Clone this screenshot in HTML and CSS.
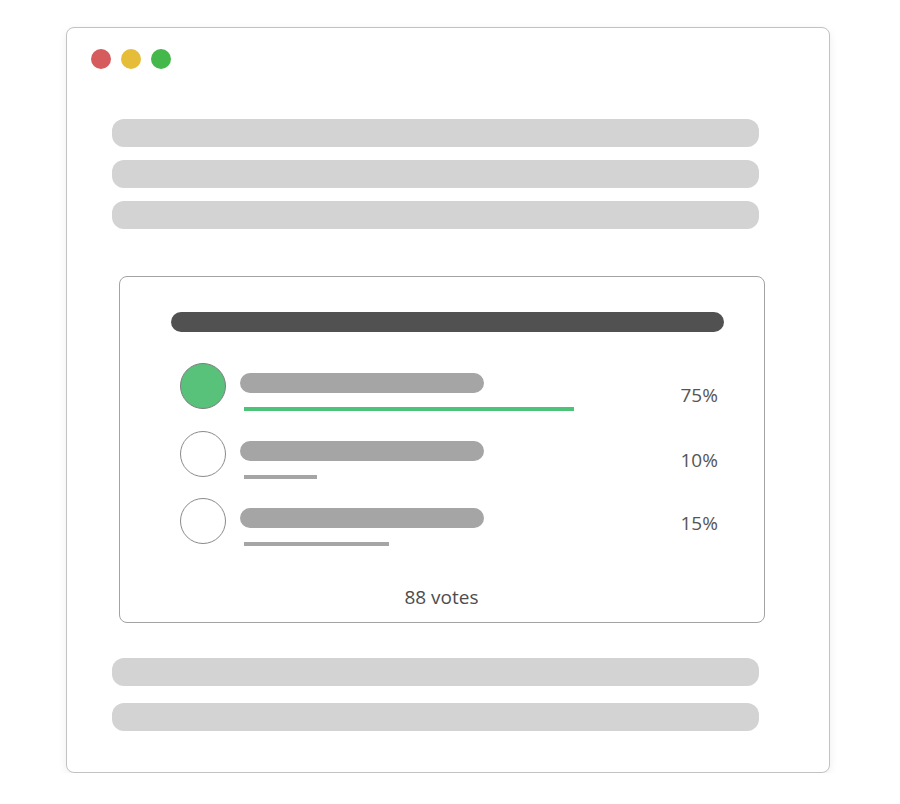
FILE: index.html
```html
<!DOCTYPE html>
<html>
<head>
<meta charset="utf-8">
<link rel="stylesheet" href="styles.css">
</head>
<body>
<div class="window">
  <div class="dots">
    <span class="dot red"></span>
    <span class="dot yellow"></span>
    <span class="dot green"></span>
  </div>
  <div class="lines top">
    <div class="line"></div>
    <div class="line"></div>
    <div class="line"></div>
  </div>
  <div class="poll">
    <div class="title-bar"></div>
    <div class="options">
      <div class="option">
        <span class="radio selected"></span>
        <div class="opt-body">
          <div class="opt-label"></div>
          <div class="opt-progress green-bar" style="width:330px"></div>
        </div>
        <span class="pct pct-1">75%</span>
      </div>
      <div class="option">
        <span class="radio"></span>
        <div class="opt-body">
          <div class="opt-label"></div>
          <div class="opt-progress" style="width:73px"></div>
        </div>
        <span class="pct pct-2">10%</span>
      </div>
      <div class="option">
        <span class="radio"></span>
        <div class="opt-body">
          <div class="opt-label"></div>
          <div class="opt-progress" style="width:145px"></div>
        </div>
        <span class="pct pct-3">15%</span>
      </div>
    </div>
    <div class="votes">88 votes</div>
  </div>
  <div class="lines bottom">
    <div class="line"></div>
    <div class="line"></div>
  </div>
</div>
</body>
</html>
```
FILE: styles.css
```css
* { box-sizing: border-box; }
html, body { margin: 0; padding: 0; background: #fff; }
body {
  font-family: "Open Sans", "Liberation Sans", sans-serif;
  padding: 27px 0 0 66px;
}
.window {
  width: 764px;
  height: 746px;
  border: 1.5px solid #c2c2c2;
  border-radius: 8px;
  background: #fff;
  box-shadow: 0 3px 10px rgba(0,0,0,0.07);
  padding: 21px 0 0 0;
}
.dots {
  display: flex;
  gap: 10px;
  padding-left: 23.5px;
  height: 20px;
}
.dot {
  width: 20px;
  height: 20px;
  border-radius: 50%;
  display: block;
}
.red { background: #d55b5c; }
.yellow { background: #e5bd38; }
.green { background: #44b84a; }
.lines {
  display: flex;
  flex-direction: column;
  margin-left: 44.5px;
  width: 647px;
}
.lines.top { margin-top: 50px; gap: 13px; }
.lines.bottom { margin-top: 35px; gap: 17px; }
.line {
  height: 28px;
  background: #d3d3d3;
  border-radius: 12px;
}
.poll {
  margin: 47px 0 0 51.5px;
  width: 646px;
  height: 347px;
  border: 1.5px solid #a3a3a3;
  border-radius: 8px;
  padding: 35px 0 0 51px;
  display: flex;
  flex-direction: column;
}
.title-bar {
  width: 553px;
  height: 20px;
  border-radius: 10px;
  background: #515151;
}
.options {
  margin-top: 31px;
  margin-left: 9px;
  display: flex;
  flex-direction: column;
  gap: 21.5px;
}
.option {
  display: flex;
  align-items: flex-start;
  height: 46px;
}
.radio {
  width: 46px;
  height: 46px;
  border-radius: 50%;
  border: 1.5px solid #8a8a8a;
  background: #fff;
  flex: none;
}
.radio.selected { background: #58c27b; border-color: #7d7d7d; }
.opt-body {
  margin-left: 14px;
  padding-top: 10px;
  width: 398px;
}
.opt-label {
  width: 244px;
  height: 20px;
  border-radius: 10px;
  background: #a5a5a5;
}
.opt-progress {
  margin: 14px 0 0 4px;
  height: 4px;
  background: #a5a5a5;
}
.opt-progress.green-bar { background: #4dc37a; }
.pct {
  margin-left: 43px;
  font-size: 19px;
  line-height: 24px;
  color: #555;
}
.pct-1 { padding-top: 20px; }
.pct-2 { padding-top: 17.5px; }
.pct-3 { padding-top: 12.5px; }
.votes {
  margin-top: 41px;
  margin-left: -51px;
  text-align: center;
  font-size: 19px;
  line-height: 24px;
  color: #4d4d4d;
}
```
